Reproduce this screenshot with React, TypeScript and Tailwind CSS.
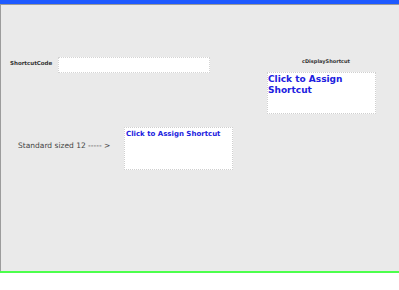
export default function App() {
  return (
    <div className="flex h-[290px] w-[399px] flex-col bg-white font-['DejaVu_Sans',sans-serif]">
      <div className="h-[4px] bg-[#1e5aff]" />
      <div className="h-[1px] bg-[#9a9a9a]" />
      {/* form designer canvas: each control sits at its form coordinates */}
      <div className="relative h-[266px] border-l border-[#9c9c9c] bg-[#eaeaea]">
        <span className="absolute left-[9px] top-[55px] text-[5.5px] font-bold leading-[7px] text-[#333]">ShortcutCode</span>
        <div className="absolute left-[57px] top-[52px] h-[16px] w-[152px] border border-dotted border-[#d4d4d4] bg-white" />

        <span className="absolute left-[301px] top-[53px] text-[5px] font-bold leading-[6px] text-[#333]">cDisplayShortcut</span>
        <div className="absolute left-[266px] top-[67px] h-[42px] w-[109px] border border-dotted border-[#cfcfcf] bg-white pt-[1px] text-[9px] font-bold leading-[11px] text-[#2020e0]">
          Click to Assign Shortcut
        </div>

        <span className="absolute left-[17px] top-[136px] whitespace-nowrap text-[7.5px] leading-[9px] text-[#444]">Standard sized 12 ----- &gt;</span>
        <div className="absolute left-[123px] top-[122px] h-[43px] w-[109px] border border-dotted border-[#cfcfcf] bg-white px-[1px] pt-[2px] text-[7px] font-bold leading-[8px] text-[#2020e0]">
          Click to Assign Shortcut
        </div>
      </div>
      <div className="h-[2px] bg-[#4cff4c]" />
    </div>
  );
}
